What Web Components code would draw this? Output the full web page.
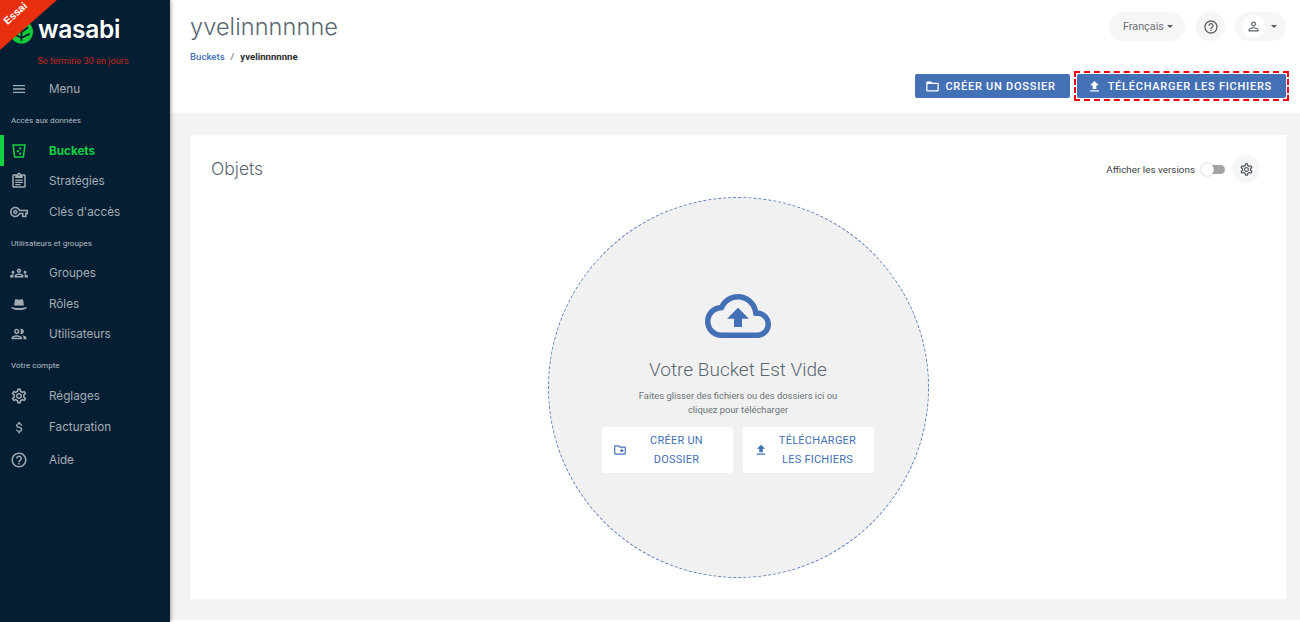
<!DOCTYPE html>
<html lang="fr">
<head>
<meta charset="utf-8">
<title>Wasabi</title>
<style>
  html, body { margin: 0; height: 100%; }
  body { font-family: Roboto, "Liberation Sans", sans-serif; overflow: hidden; }
</style>
</head>
<body>
<wb-app>
  <wb-sidebar slot="side">
    <wb-nav-item icon="menu" icon-size="16" label="Menu"></wb-nav-item>
    <wb-nav-section>Accès aux données</wb-nav-section>
    <wb-nav-item icon="bucket" label="Buckets" active></wb-nav-item>
    <wb-nav-item icon="policy" label="Stratégies"></wb-nav-item>
    <wb-nav-item icon="key" label="Clés d'accès"></wb-nav-item>
    <wb-nav-section>Utilisateurs et groupes</wb-nav-section>
    <wb-nav-item icon="groups" label="Groupes"></wb-nav-item>
    <wb-nav-item icon="hat" label="Rôles"></wb-nav-item>
    <wb-nav-item icon="people" label="Utilisateurs"></wb-nav-item>
    <wb-nav-section>Votre compte</wb-nav-section>
    <wb-nav-item icon="gear" label="Réglages"></wb-nav-item>
    <wb-nav-item icon="dollar" icon-size="15" label="Facturation" style="height: 32.5px"></wb-nav-item>
    <wb-nav-item icon="help" label="Aide" style="height: 32.5px"></wb-nav-item>
  </wb-sidebar>
  <wb-header slot="head" name="yvelinnnnnne"></wb-header>
  <wb-objects slot="body"></wb-objects>
</wb-app>

<script>
const ICONS = {
  menu: '<path d="M3 18h18v-2H3v2zm0-5h18v-2H3v2zm0-7v2h18V6H3z"/>',
  bucket: '<path fill-rule="evenodd" d="M3 3h18l-2.2 18H5.2L3 3zm2.3 2 1.7 14h10l1.7-14H5.3z"/><circle cx="13.6" cy="8.6" r="1.5"/><circle cx="10.4" cy="12.2" r="1.5"/><circle cx="13.6" cy="15.6" r="1.5"/>',
  policy: '<path d="M19 3h-4.18C14.4 1.84 13.3 1 12 1c-1.3 0-2.4.84-2.82 2H5c-1.1 0-2 .9-2 2v14c0 1.1.9 2 2 2h14c1.1 0 2-.9 2-2V5c0-1.1-.9-2-2-2zm-7 0c.55 0 1 .45 1 1s-.45 1-1 1-1-.45-1-1 .45-1 1-1zm7 16H5V5h2v3h10V5h2v14z"/><path d="M7 10h10v1.6H7zM7 13h10v1.6H7zM7 16h7v1.6H7z"/>',
  key: '<path d="M22 19h-6v-4h-2.68c-1.14 2.42-3.6 4-6.32 4-3.86 0-7-3.14-7-7s3.14-7 7-7c2.72 0 5.17 1.58 6.32 4H24v6h-2v4zm-4-2h2v-4h2v-2H11.94l-.23-.67C11.01 8.34 9.11 7 7 7c-2.76 0-5 2.24-5 5s2.24 5 5 5c2.11 0 4.01-1.34 4.71-3.33l.23-.67H18v4zM7 15c-1.65 0-3-1.35-3-3s1.35-3 3-3 3 1.35 3 3-1.35 3-3 3zm0-4c-.55 0-1 .45-1 1s.45 1 1 1 1-.45 1-1-.45-1-1-1z"/>',
  groups: '<path d="M4 13c1.1 0 2-.9 2-2 0-1.1-.9-2-2-2s-2 .9-2 2c0 1.1.9 2 2 2zm1.13 1.1C4.76 14.04 4.39 14 4 14c-.99 0-1.93.21-2.78.58C.48 14.9 0 15.62 0 16.43V18h4.5v-1.61c0-.83.23-1.61.63-2.29zM20 13c1.1 0 2-.9 2-2 0-1.1-.9-2-2-2s-2 .9-2 2c0 1.1.9 2 2 2zm4 3.43c0-.81-.48-1.53-1.22-1.85C21.93 14.21 20.99 14 20 14c-.39 0-.76.04-1.13.1.4.68.63 1.46.63 2.29V18H24v-1.57zM16.24 13.65c-1.17-.52-2.61-.9-4.24-.9-1.63 0-3.07.39-4.24.9C6.68 14.13 6 15.21 6 16.39V18h12v-1.61c0-1.18-.68-2.26-1.76-2.74zM8.07 16c.09-.23.13-.39.91-.69.97-.38 1.99-.56 3.02-.56s2.05.18 3.02.56c.77.3.81.46.91.69H8.07zM12 8c.55 0 1 .45 1 1s-.45 1-1 1-1-.45-1-1 .45-1 1-1m0-2c-1.66 0-3 1.34-3 3s1.34 3 3 3 3-1.34 3-3-1.34-3-3-3z"/>',
  hat: '<path d="M5.5 14l.8-6.500C6.500 6 7.500 5.500 8.500 5.500c1.200 0 2.200.7 3.500.7s2.300-.7 3.500-.7c1 0 2 .5 2.200 2l.8 6.500z"/><path d="M2 15.500c3 1.500 6 1.800 10 1.800s7-.3 10-1.800v2c-3 2-7 2.500-10 2.500s-7-.5-10-2.500z"/>',
  people: '<path d="M9 13.750c-2.340 0-7 1.170-7 3.500V19h14v-1.750c0-2.330-4.660-3.500-7-3.500zM4.340 17c.84-.58 2.870-1.250 4.660-1.250s3.820.67 4.660 1.250H4.340zM9 12c1.930 0 3.500-1.570 3.500-3.500S10.930 5 9 5 5.500 6.570 5.500 8.500 7.070 12 9 12zm0-5c.83 0 1.500.67 1.500 1.500S9.830 10 9 10s-1.500-.67-1.500-1.500S8.170 7 9 7zm7.040 6.810c1.160.84 1.960 1.960 1.960 3.440V19h4v-1.750c0-2.020-3.500-3.170-5.960-3.440zM15 12c1.930 0 3.500-1.570 3.500-3.500S16.930 5 15 5c-.54 0-1.040.13-1.500.35.63.89 1 1.980 1 3.150s-.37 2.260-1 3.150c.46.22.96.35 1.500.35z"/>',
  gear: '<path d="M19.430 12.980c.04-.32.07-.64.07-.98 0-.34-.03-.66-.07-.98l2.110-1.650c.19-.15.24-.42.12-.64l-2-3.460c-.09-.16-.26-.25-.44-.25-.06 0-.12.01-.17.03l-2.490 1c-.52-.4-1.080-.73-1.690-.98l-.38-2.650C14.460 2.180 14.250 2 14 2h-4c-.25 0-.46.18-.49.42l-.38 2.650c-.61.25-1.170.59-1.690.98l-2.490-1c-.06-.02-.12-.03-.18-.03-.17 0-.34.09-.43.25l-2 3.460c-.13.22-.07.49.12.64l2.110 1.650c-.04.32-.07.65-.07.98 0 .33.03.66.07.98l-2.110 1.650c-.19.15-.24.42-.12.64l2 3.460c.09.16.26.25.44.25.06 0 .12-.01.17-.03l2.490-1c.52.4 1.080.73 1.690.98l.38 2.650c.03.24.24.42.49.42h4c.25 0 .46-.18.49-.42l.38-2.650c.61-.25 1.170-.59 1.690-.98l2.490 1c.06.02.12.03.18.03.17 0 .34-.09.43-.25l2-3.460c.12-.22.07-.49-.12-.64l-2.110-1.650zm-1.980-1.710c.04.31.05.52.05.73 0 .21-.02.43-.05.73l-.14 1.130.89.7 1.080.84-.7 1.210-1.270-.51-1.040-.42-.9.68c-.43.32-.84.56-1.250.73l-1.060.43-.16 1.130-.2 1.350h-1.400l-.19-1.350-.16-1.130-1.060-.43c-.43-.18-.83-.41-1.230-.71l-.91-.7-1.060.43-1.270.51-.7-1.210 1.080-.84.89-.7-.14-1.130c-.03-.31-.05-.54-.05-.74s.02-.43.05-.73l.14-1.130-.89-.7-1.080-.84.7-1.210 1.270.51 1.040.42.9-.68c.43-.32.84-.56 1.250-.73l1.060-.43.16-1.130.2-1.350h1.390l.19 1.350.16 1.130 1.060.43c.43.18.83.41 1.230.71l.91.7 1.060-.43 1.270-.51.7 1.210-1.070.85-.89.7.14 1.130zM12 8c-2.210 0-4 1.790-4 4s1.790 4 4 4 4-1.790 4-4-1.790-4-4-4zm0 6c-1.100 0-2-.9-2-2s.9-2 2-2 2 .9 2 2-.9 2-2 2z"/>',
  dollar: '<path d="M11.800 10.900c-2.270-.59-3-1.200-3-2.150 0-1.090 1.010-1.850 2.700-1.850 1.780 0 2.440.85 2.500 2.100h2.210c-.07-1.720-1.120-3.300-3.210-3.810V3h-3v2.160c-1.940.42-3.500 1.680-3.500 3.610 0 2.310 1.910 3.460 4.700 4.130 2.500.6 3 1.480 3 2.410 0 .69-.49 1.790-2.700 1.790-2.060 0-2.870-.92-2.980-2.100h-2.200c.12 2.190 1.760 3.420 3.680 3.830V21h3v-2.150c1.950-.37 3.500-1.500 3.500-3.550 0-2.840-2.430-3.810-4.700-4.400z"/>',
  help: '<path d="M11 18h2v-2h-2v2zm1-16C6.480 2 2 6.480 2 12s4.480 10 10 10 10-4.480 10-10S17.520 2 12 2zm0 18c-4.410 0-8-3.590-8-8s3.590-8 8-8 8 3.590 8 8-3.590 8-8 8zm0-14c-2.210 0-4 1.790-4 4h2c0-1.100.9-2 2-2s2 .9 2 2c0 2-3 1.750-3 5h2c0-2.250 3-2.500 3-5 0-2.210-1.790-4-4-4z"/>',
  person: '<path d="M12 5.900c1.160 0 2.100.94 2.100 2.100s-.94 2.100-2.100 2.100S9.900 9.160 9.900 8s.94-2.100 2.100-2.100m0 9c2.970 0 6.100 1.460 6.100 2.100v1.100H5.900V17c0-.64 3.130-2.100 6.100-2.100M12 4C9.790 4 8 5.790 8 8s1.790 4 4 4 4-1.790 4-4-1.790-4-4-4zm0 9c-2.670 0-8 1.340-8 4v3h16v-3c0-2.660-5.330-4-8-4z"/>',
  folder: '<path d="M20 6h-8l-2-2H4c-1.100 0-1.990.9-1.990 2L2 18c0 1.100.9 2 2 2h16c1.100 0 2-.9 2-2V8c0-1.100-.9-2-2-2zm0 12H4V8h16v10z"/>',
  upload: '<path d="M9 16h6v-6h4l-7-7-7 7h4zm-4 2h14v2H5z"/>',
  newfolder: '<path d="M20 6h-8l-2-2H4c-1.110 0-1.990.89-1.990 2L2 18c0 1.110.89 2 2 2h16c1.110 0 2-.89 2-2V8c0-1.110-.89-2-2-2zm0 12H4V6h5.170l2 2H20v10zm-8-4h2v2h2v-2h2v-2h-2v-2h-2v2h-2z"/>',
  cloud: '<path d="M19.350 10.040C18.670 6.590 15.640 4 12 4 9.110 4 6.600 5.640 5.350 8.040 2.340 8.360 0 10.910 0 14c0 3.310 2.690 6 6 6h13c2.760 0 5-2.240 5-5 0-2.640-2.050-4.780-4.650-4.960zM19 18H6c-2.210 0-4-1.790-4-4 0-2.050 1.530-3.760 3.560-3.970l1.070-.11.5-.95C8.080 7.140 9.940 6 12 6c2.620 0 4.880 1.860 5.390 4.430l.3 1.500 1.530.11c1.560.1 2.780 1.410 2.780 2.960 0 1.650-1.350 3-3 3z"/><path d="M8 13h2.550v3h2.900v-3H16l-4-4z"/>'
};

class WbIcon extends HTMLElement {
    connectedCallback() {
        const size = this.getAttribute('size') || 18;
        this.attachShadow({ mode: 'open' }).innerHTML = `
            <style>
            :host { display: inline-flex; flex: none; }
            svg { display: block; fill: currentColor; }
            </style>
            <svg width="${size}" height="${size}" viewBox="0 0 24 24">${ICONS[this.getAttribute('name')]}</svg>`;
    }
}

class WbApp extends HTMLElement {
    constructor() {
        super();
        this.attachShadow({ mode: 'open' }).innerHTML = `
            <style>
            :host { display: flex; height: 622px; background: #f3f3f3; }
            .side { flex: none; width: 170px; position: relative; z-index: 2; box-shadow: 1px 0 4px rgb(0 0 0 / 0.35); }
            .main { flex: 1; min-width: 0; display: flex; flex-direction: column; }
            .main::after { content: ""; flex: none; height: 2px; background: #fff; }
            </style>
            <div class="side"><slot name="side"></slot></div>
            <div class="main">
              <slot name="head"></slot>
              <slot name="body"></slot>
            </div>`;
    }
}

class WbSidebar extends HTMLElement {
    constructor() {
        super();
        this.attachShadow({ mode: 'open' }).innerHTML = `
            <style>
            :host { display: flex; flex-direction: column; height: 622px; background: #041e33; position: relative; overflow: hidden; }
            .ribbon { position: absolute; left: 0; top: 0; width: 57px; height: 50px; background: #e8300f; clip-path: polygon(0 0, 100% 0, 0 100%); }
            .ribbon span {
                position: absolute; left: 1px; top: 7px; width: 28px; text-align: center;
                transform: rotate(-42deg);
                font: 700 10.5px "Liberation Sans", sans-serif; color: #fff;
            }
            .logo { display: flex; align-items: center; height: 45px; padding: 8px 0 0 10px; gap: 5px; }
            .logo span { font: 600 24.500px/1 Inter, sans-serif; letter-spacing: -0.3px; color: #fff; margin-top: -2px; }
            .logo svg { flex: none; margin-top: 3px; }
            .trial { text-align: center; font: 400 9.200px/14px Roboto, sans-serif; color: #c0271a; padding: 1px 4px 4px 0; height: 16px; }
            .nav { display: flex; flex-direction: column; }
            </style>
            <div class="logo">
              <svg width="23" height="24" viewBox="0 0 24 24"><circle cx="12" cy="12" r="12" fill="#12c93a"/><path d="M12 3v18M5 7l7 5 7-5M3.500 14l8.500 4 8.500-4" stroke="#041e33" stroke-width="2" fill="none"/></svg>
              <span>wasabi</span>
            </div>
            <div class="trial">Se termine 30 en jours</div>
            <div class="nav"><slot></slot></div>
            <div class="ribbon"><span>Essai</span></div>`;
    }
}

class WbNavItem extends HTMLElement {
    connectedCallback() {
        const active = this.hasAttribute('active');
        this.attachShadow({ mode: 'open' }).innerHTML = `
            <style>
            :host {
                display: flex; align-items: center; gap: 21px;
                height: 30.700px; padding-left: 10px; position: relative;
                color: ${active ? '#12d13f' : '#a4acb3'};
                font: ${active ? 700 : 400} 11.700px Inter, sans-serif;
            }
            .bar { position: absolute; left: 0; top: 0; bottom: 0; width: 4px; background: #12d13f; }
            .ic { display: flex; justify-content: center; width: 18px; }
            </style>
            ${active ? '<div class="bar"></div>' : ''}
            <div class="ic"><wb-icon name="${this.getAttribute('icon')}" size="${this.getAttribute('icon-size') || 18}"></wb-icon></div>
            <span>${this.getAttribute('label')}</span>`;
    }
}

class WbNavSection extends HTMLElement {
    constructor() {
        super();
        this.attachShadow({ mode: 'open' }).innerHTML = `
            <style>
            :host { display: flex; align-items: center; height: 30.500px; padding-left: 11px; color: #b7bdc2; font: 400 8.100px Roboto, sans-serif; }
            </style>
            <slot></slot>`;
    }
}

class WbButton extends HTMLElement {
    connectedCallback() {
        this.attachShadow({ mode: 'open' }).innerHTML = `
            <style>
            :host {
                display: flex; align-items: center; height: 24px; box-sizing: border-box; padding-right: 14px;
                background: #4470b6; color: #fff; border-radius: 2px;
                font: 500 11px Roboto, sans-serif; letter-spacing: 0.750px; white-space: nowrap;
            }
            </style>
            <wb-icon name="${this.getAttribute('icon')}" size="15"></wb-icon>
            <slot></slot>`;
    }
}

class WbHeader extends HTMLElement {
    connectedCallback() {
        const name = this.getAttribute('name');
        this.attachShadow({ mode: 'open' }).innerHTML = `
            <style>
            :host { display: block; height: 113px; box-sizing: border-box; background: #fff; padding: 12px 14px 0 20px; position: relative; }
            .top { display: flex; justify-content: space-between; align-items: flex-start; }
            h1 { margin: 0; font: 300 23.500px/30px Inter, sans-serif; color: #596772; letter-spacing: 0.100px; }
            .crumbs { display: flex; gap: 6px; margin-top: 8px; font: 500 9.600px/14px Roboto, sans-serif; color: #6d7780; }
            .crumbs a { color: #4470b6; }
            .crumbs b { color: #2c2f33; font-weight: 700; }
            .tools { display: flex; align-items: center; gap: 10px; }
            .pill { display: flex; align-items: center; height: 29px; border-radius: 15px; background: #f6f6f6; color: #6a7178; font-size: 10.800px; }
            .lang { width: 76px; box-sizing: border-box; padding: 0 0 0 14px; gap: 3px; margin-right: 1px; }
            .help { width: 29px; justify-content: center; color: #5d6469; }
            .user { width: 51px; box-sizing: border-box; padding-left: 7px; gap: 6px; color: #5d6469; }
            .user span { width: 23px; height: 23px; border-radius: 50%; background: #fff; display: flex; align-items: center; justify-content: center; }
            .caret { width: 0; height: 0; border: 3px solid transparent; border-top: 3.500px solid #555c62; border-bottom: 0; }
            .actions { display: flex; justify-content: flex-end; gap: 7px; margin-top: 10px; }
            .create { padding-left: 10px; gap: 5px; }
            .upload { padding-left: 10px; gap: 6px; }
            .marked { outline: 2px dashed #f0000f; outline-offset: 1px; }
            </style>
            <div class="top">
              <div>
                <h1>${name}</h1>
                <div class="crumbs"><a>Buckets</a><span>/</span><b>${name}</b></div>
              </div>
              <div class="tools">
                <div class="pill lang">Français <i class="caret"></i></div>
                <div class="pill help"><wb-icon name="help" size="16"></wb-icon></div>
                <div class="pill user"><span><wb-icon name="person" size="15"></wb-icon></span><i class="caret"></i></div>
              </div>
            </div>
            <div class="actions">
              <wb-button class="create" icon="folder">CRÉER UN DOSSIER</wb-button>
              <div class="marked"><wb-button class="upload" icon="upload">TÉLÉCHARGER LES FICHIERS</wb-button></div>
            </div>`;
    }
}

class WbEmptyAction extends HTMLElement {
    connectedCallback() {
        this.attachShadow({ mode: 'open' }).innerHTML = `
            <style>
            :host {
                display: flex; align-items: center; width: 131px; height: 46px; box-sizing: border-box; padding: 0 12px 0 11px;
                background: #fff; border-radius: 2px; color: #4470b6;
                font: 400 11px/19px Roboto, sans-serif; letter-spacing: 0.250px;
            }
            div { width: 89px; margin-left: 5px; text-align: center; }
            </style>
            <wb-icon name="${this.getAttribute('icon')}" size="14"></wb-icon>
            <div><slot></slot></div>`;
    }
}

class WbObjects extends HTMLElement {
    constructor() {
        super();
        this.attachShadow({ mode: 'open' }).innerHTML = `
            <style>
            :host { display: flex; flex: 1; flex-direction: column; margin: 22px 14px 21px 20px; padding: 20px 0 21px; background: #fff; box-sizing: border-box; }
            .head { display: flex; align-items: center; justify-content: space-between; height: 28px; padding: 0 26px 0 21px; }
            h2 { margin: -1px 0 0; font: 300 17.500px Inter, sans-serif; color: #596772; }
            .versions { display: flex; align-items: center; font-size: 9.900px; color: #3b3f43; }
            .switch { width: 23px; height: 9px; margin: 0 7px 0 7px; border-radius: 5px; background: #a3a3a3; position: relative; }
            .switch::before { content: ""; position: absolute; left: -1px; top: -2px; width: 13px; height: 13px; border-radius: 50%; background: #fff; box-shadow: 0 0 2px rgb(0 0 0 / 0.3); }
            .gear { width: 28px; height: 28px; border-radius: 50%; background: #f6f6f6; display: flex; align-items: center; justify-content: center; color: #555c62; }
            .stage { display: flex; justify-content: center; margin-top: 14px; }
            .circle {
                width: 381px; height: 381px; box-sizing: border-box; border-radius: 50%;
                border: 1px dashed #5b80bd; background: #f1f1f1;
                display: flex; flex-direction: column; align-items: center; padding-top: 96px;
            }
            .cloud { color: #4470b6; height: 44px; overflow: hidden; }
            .cloud wb-icon { margin-top: -11px; }
            h3 { margin: 20px 0 0; font: 300 19px/24px Roboto, sans-serif; color: #596772; }
            p { margin: 7px 0 0; width: 230px; text-align: center; font: 400 9.400px/14px Roboto, sans-serif; color: #6a7178; }
            .btns { display: flex; gap: 10px; margin-top: 10px; }
            </style>
            <div class="head">
              <h2>Objets</h2>
              <div class="versions">Afficher les versions<span class="switch"></span><span class="gear"><wb-icon name="gear" size="15"></wb-icon></span></div>
            </div>
            <div class="stage">
              <div class="circle">
                <div class="cloud"><wb-icon name="cloud" size="66"></wb-icon></div>
                <h3>Votre Bucket Est Vide</h3>
                <p>Faites glisser des fichiers ou des dossiers ici ou cliquez pour télécharger</p>
                <div class="btns">
                  <wb-empty-action icon="newfolder">CRÉER UN DOSSIER</wb-empty-action>
                  <wb-empty-action icon="upload">TÉLÉCHARGER LES FICHIERS</wb-empty-action>
                </div>
              </div>
            </div>`;
    }
}

customElements.define('wb-icon', WbIcon);
customElements.define('wb-app', WbApp);
customElements.define('wb-sidebar', WbSidebar);
customElements.define('wb-nav-item', WbNavItem);
customElements.define('wb-nav-section', WbNavSection);
customElements.define('wb-button', WbButton);
customElements.define('wb-header', WbHeader);
customElements.define('wb-empty-action', WbEmptyAction);
customElements.define('wb-objects', WbObjects);
</script>
</body>
</html>
